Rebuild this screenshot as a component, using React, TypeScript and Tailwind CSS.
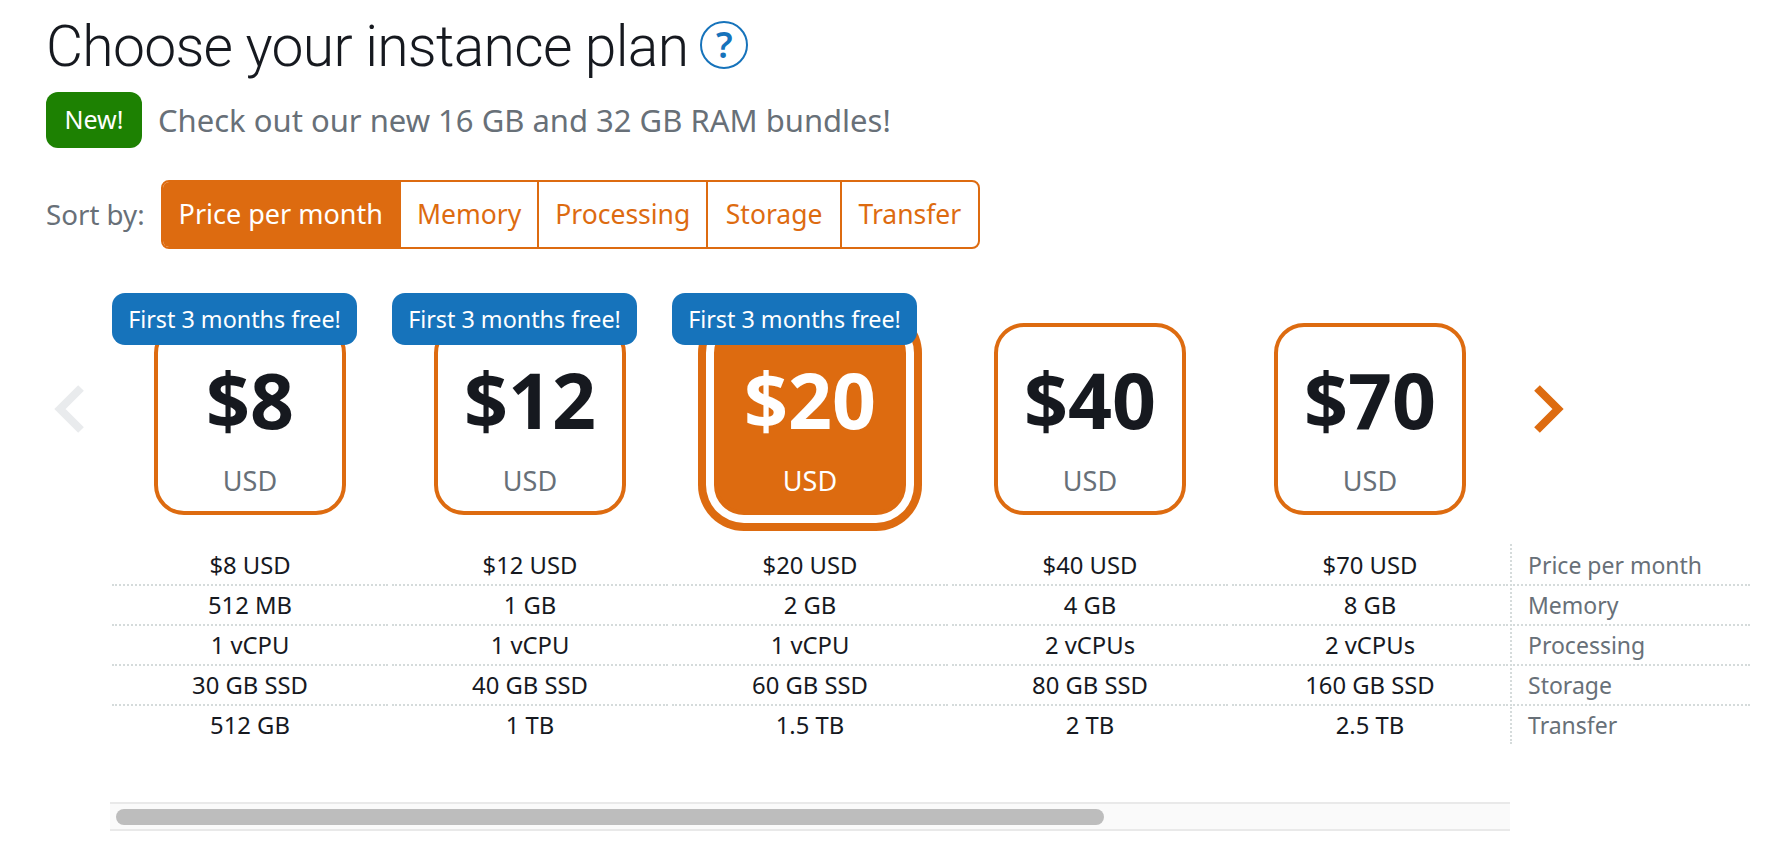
import React from 'react';

type Plan = {
  price: string;
  memory: string;
  processing: string;
  storage: string;
  transfer: string;
  promo?: boolean;
  selected?: boolean;
};

const plans: Plan[] = [
  { price: '$8', memory: '512 MB', processing: '1 vCPU', storage: '30 GB SSD', transfer: '512 GB', promo: true },
  { price: '$12', memory: '1 GB', processing: '1 vCPU', storage: '40 GB SSD', transfer: '1 TB', promo: true },
  { price: '$20', memory: '2 GB', processing: '1 vCPU', storage: '60 GB SSD', transfer: '1.5 TB', promo: true, selected: true },
  { price: '$40', memory: '4 GB', processing: '2 vCPUs', storage: '80 GB SSD', transfer: '2 TB' },
  { price: '$70', memory: '8 GB', processing: '2 vCPUs', storage: '160 GB SSD', transfer: '2.5 TB' },
];

const sortOptions = [
  { label: 'Price per month', cls: 'px-[16px] bg-[#dd6b10] text-[27px] text-white' },
  { label: 'Memory', cls: 'px-[16px] border-l-2 border-[#dd6b10] text-[26.5px] text-[#dd6b10]' },
  { label: 'Processing', cls: 'px-[16px] border-l-2 border-[#dd6b10] text-[26.5px] text-[#dd6b10]' },
  { label: 'Storage', cls: 'px-[17.5px] border-l-2 border-[#dd6b10] text-[26.5px] text-[#dd6b10]' },
  { label: 'Transfer', cls: 'px-[16.5px] border-l-2 border-[#dd6b10] text-[26.5px] text-[#dd6b10]' },
];

const rows = [
  { label: 'Price per month', values: plans.map(p => `${p.price} USD`) },
  { label: 'Memory', values: plans.map(p => p.memory) },
  { label: 'Processing', values: plans.map(p => p.processing) },
  { label: 'Storage', values: plans.map(p => p.storage) },
  { label: 'Transfer', values: plans.map(p => p.transfer) },
];

const Chevron = ({ dir, className }: { dir: 'left' | 'right'; className: string }) => (
  <svg className={className} viewBox="0 0 32 48" fill="none" stroke="currentColor" strokeWidth={8} strokeMiterlimit={10}>
    <path d={dir === 'left' ? 'M28 3 L7 24 L28 45' : 'M4 3 L25 24 L4 45'} />
  </svg>
);

const PlanCard = ({ plan }: { plan: Plan }) => (
  <div className="flex justify-center">
    <div
      className={`relative flex h-[192px] w-[192px] flex-col items-center rounded-[30px] border-4 border-[#dd6b10] ${
        plan.selected ? 'bg-[#dd6b10] shadow-[0_0_0_8px_#fff,0_0_0_16px_#dd6b10]' : 'bg-white'
      }`}
    >
      {plan.promo && (
        <div className="absolute left-[-46px] top-[-34px] flex h-[52px] w-[245px] items-center justify-center rounded-[13px] bg-[#1673bb] pt-[2px] text-[23.3px] text-white">
          First 3 months free!
        </div>
      )}
      <div className={`mt-[21px] text-[77px] font-bold leading-[104px] ${plan.selected ? 'text-white' : 'text-[#16191f]'}`}>
        {plan.price}
      </div>
      <div className={`mt-[12px] text-[27px] leading-[34px] ${plan.selected ? 'text-white' : 'text-[#687078]'}`}>USD</div>
    </div>
  </div>
);

export default function App() {
  return (
    <div className="h-[850px] w-full overflow-hidden bg-white font-['Noto_Sans',sans-serif] text-[#16191f]">
      <div className="flex items-center pl-[46px] pt-[14px]">
        <h1 className="font-['Roboto',sans-serif] text-[57px] font-light leading-[66px] tracking-[-0.7px]">Choose your instance plan</h1>
        <span className="mb-[4px] ml-[12px] flex h-[48px] w-[48px] items-center justify-center rounded-full border-2 border-[#1673bb] text-[36px] font-semibold text-[#1673bb]">
          ?
        </span>
      </div>

      <div className="mt-[12px] flex items-center pl-[46px]">
        <span className="flex h-[56px] w-[96px] items-center justify-center rounded-[12px] bg-[#1d8102] text-[25px] text-white">New!</span>
        <span className="ml-[16px] text-[31px] text-[#687078]">Check out our new 16 GB and 32 GB RAM bundles!</span>
      </div>

      <div className="mt-[32px] flex items-center pl-[46px]">
        <span className="mr-[16px] text-[27.7px] text-[#687078]">Sort by:</span>
        <div className="flex h-[69px] overflow-hidden rounded-[8px] border-2 border-[#dd6b10]">
          {sortOptions.map(opt => (
            <div key={opt.label} className={`flex items-center ${opt.cls}`}>
              {opt.label}
            </div>
          ))}
        </div>
      </div>

      <div className="mt-[74px] flex h-[191px] items-center">
        <div className="mb-[20px] flex w-[110px] justify-center pl-[28px]">
          <Chevron dir="left" className="h-[48px] w-[32px] text-[#e9ebed]" />
        </div>
        <div className="grid grid-cols-[repeat(5,280px)]">
          {plans.map(plan => (
            <PlanCard key={plan.price} plan={plan} />
          ))}
        </div>
        <div className="mb-[20px] ml-[23px]">
          <Chevron dir="right" className="h-[48px] w-[32px] text-[#dd6b10]" />
        </div>
      </div>

      <div className="ml-[110px] mt-[30px] w-[1640px]">
        {rows.map((row, r) => (
          <div key={row.label} className="grid h-[40px] grid-cols-[repeat(5,280px)_240px]">
            {row.values.map((val, c) => (
              <div key={c} className="px-[2px]">
                <div
                  className={`flex h-full items-center justify-center pt-[4px] text-[23.8px] ${
                    r < rows.length - 1 ? 'border-b-2 border-dotted border-[#d5dbdb]' : ''
                  }`}
                >
                  {val}
                </div>
              </div>
            ))}
            <div
              className={`flex items-center border-l-2 border-dotted border-[#d5dbdb] pl-[16px] pt-[3px] text-[23px] text-[#687078] ${
                r < rows.length - 1 ? 'border-b-2' : ''
              }`}
            >
              {row.label}
            </div>
          </div>
        ))}
      </div>

      <div className="ml-[110px] mt-[58px] flex h-[29px] w-[1400px] items-center border-y-2 border-[#e9e9e9] bg-[#fafafa] px-[6px]">
        <div className="h-[16px] w-[988px] rounded-full bg-[#bdbdbd]" />
      </div>
    </div>
  );
}
